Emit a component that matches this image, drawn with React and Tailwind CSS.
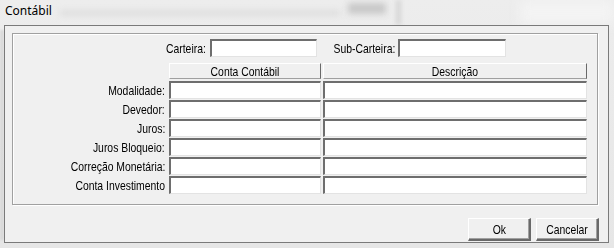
import React from "react";

const font = { fontFamily: "'Liberation Sans', Arial, sans-serif" };

const sunken =
  "h-[18px] bg-white border-t-2 border-l-2 border-t-[#6e6e6e] border-l-[#6e6e6e] border-b border-r border-b-[#e3e3e3] border-r-[#e3e3e3]";

const rows = ["Modalidade:", "Devedor:", "Juros:", "Juros Bloqueio:", "Correção Monetária:", "Conta Investimento"];

// the dialog uses a condensed face, so squeeze Liberation Sans horizontally
function Narrow({ children, origin = "origin-right" }) {
  return <span className={`inline-block whitespace-nowrap scale-x-[0.8] ${origin}`}>{children}</span>;
}

function Header({ children }) {
  return (
    <div className="h-[16px] bg-[#f0f0f0] border-t border-l border-t-white border-l-white border-b border-r border-b-[#a0a0a0] border-r-[#696969] flex items-center justify-center text-[13px] leading-none text-black">
      <Narrow origin="origin-center">{children}</Narrow>
    </div>
  );
}

function Button({ children }) {
  return (
    <div className="w-[63px] h-[23px] bg-[#f0f0f0] border-t border-l border-t-white border-l-white border-b-2 border-r-2 border-b-[#696969] border-r-[#696969] shadow-[inset_-1px_-1px_0_#a0a0a0] flex items-center justify-center text-[13px] leading-none text-black">
      <Narrow origin="origin-center">{children}</Narrow>
    </div>
  );
}

export default function App() {
  return (
    <div className="relative w-[614px] h-[248px] overflow-hidden bg-gradient-to-b from-[#ededed] to-[#e6e6e6]">
      {/* blurred aero glass behind the title bar */}
      <div className="absolute left-[60px] top-[11px] w-[280px] h-[4px] bg-[#d8d8d8] blur-[3px]" />
      <div className="absolute left-[348px] top-[3px] w-[38px] h-[11px] bg-[#c8c8c8] blur-[3px]" />
      <div className="absolute left-[396px] top-0 w-[5px] h-[25px] bg-[#d6d6d6] blur-[2px]" />
      <div className="absolute left-[520px] top-0 w-[94px] h-[25px] bg-[#f3f3f3] blur-[6px]" />
      <div className="absolute left-0 top-[30px] w-[4px] h-[210px] bg-[#d9d9d9] blur-[1px]" />

      <div className="relative h-[25px] pl-[5px] pt-[2px] text-[12px] text-black" style={{ fontFamily: "'Noto Sans', 'Open Sans', sans-serif" }}>
        Contábil
      </div>

      <div className="relative ml-[4px] w-[605px] h-[218px] bg-[#f0f0f0] border border-[#7a7a7a] flex flex-col" style={font}>
        <div className="ml-[7px] mt-[7px] w-[586px] h-[172px] border border-[#a0a0a0] shadow-[inset_1px_1px_0_#fff,1px_1px_0_#fff] flex flex-col">
          <div className="flex items-center mt-[5px] h-[18px] text-[13px] leading-none text-black">
            <div className="w-[194px] pr-[1px] text-right"><Narrow>Carteira:</Narrow></div>
            <div className={`${sunken} ml-[3px] w-[107px]`} />
            <div className="w-[80px] pr-[2px] text-right"><Narrow>Sub-Carteira:</Narrow></div>
            <div className={`${sunken} ml-[1px] w-[108px]`} />
          </div>

          <div className="grid grid-cols-[154px_152px_264px] gap-x-[2px] mt-[6px] text-[13px] text-black">
            <div />
            <Header>Conta Contábil</Header>
            <Header>Descrição</Header>
          </div>

          <div className="grid grid-cols-[154px_152px_264px] gap-x-[2px] gap-y-[1px] mt-[2px] text-[13px] text-black">
            {rows.map((r) => (
              <React.Fragment key={r}>
                <div className="h-[18px] flex items-center justify-end pr-[2px] leading-none">
                  <Narrow>{r}</Narrow>
                </div>
                <div className={sunken} />
                <div className={sunken} />
              </React.Fragment>
            ))}
          </div>
        </div>

        <div className="flex justify-end gap-[5px] mt-auto mb-[1px] mr-[9px]">
          <Button>Ok</Button>
          <Button>Cancelar</Button>
        </div>
      </div>
    </div>
  );
}
